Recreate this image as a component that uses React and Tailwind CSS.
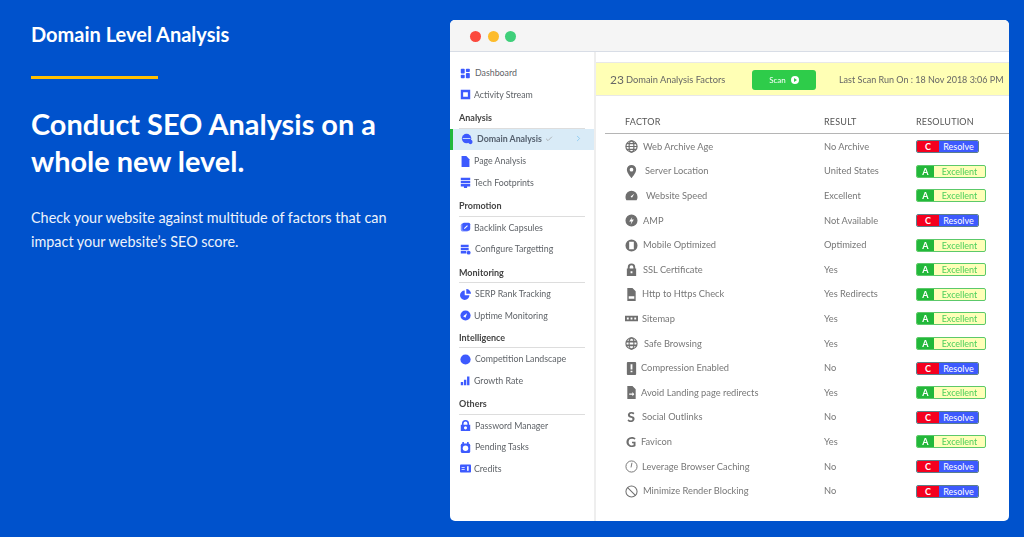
import { Check, ChevronRight } from 'lucide-react'

const blue = '#3d5afe'
const gray = '#6f6f6f'

const shapes = {
  dashboard: (
    <>
      <rect x="1" y="1" width="5" height="6" rx="1" />
      <rect x="7.5" y="1" width="5" height="4" rx="1" />
      <rect x="1" y="8.5" width="5" height="4.5" rx="1" />
      <rect x="7.5" y="6.5" width="5" height="6.5" rx="1" />
    </>
  ),
  stream: <path fillRule="evenodd" d="M1 1h12v12H1zM4 4v6h6V4z" />,
  domain: (
    <>
      <circle cx="6.5" cy="6.5" r="5.5" />
      <circle cx="11" cy="10.5" r="2.5" />
      <path d="M2 6h9v1H2z" fill="#dbeafe" />
    </>
  ),
  page: <path d="M2 0h6l4 4v10H2z" />,
  tech: <path d="M1 1h12v3H1zM1 5h12v3H1zM1 9h12v3H1zM5 12h4v2H5z" />,
  backlink: (
    <>
      <rect x="1" y="2" width="10" height="10" rx="2" opacity=".65" />
      <rect x="3" y="1" width="10" height="10" rx="2" />
      <path d="M5 8l4-4 1 1-4 4z" fill="#fff" />
    </>
  ),
  target: (
    <>
      <path d="M1 1h10v3H1zM1 5h10v3H1zM1 9h7v3H1z" />
      <circle cx="11" cy="11" r="2.5" />
    </>
  ),
  pie: <path d="M6 2v6h6a6 6 0 1 1-6-6zM8 0a6 6 0 0 1 6 6H8z" />,
  uptime: (
    <>
      <circle cx="7" cy="7" r="6.5" />
      <path d="M4 8l5-4-2 6z" fill="#fff" />
    </>
  ),
  circle: <circle cx="7" cy="7" r="6.5" />,
  growth: <path d="M1 9h3v4H1zM5 6h3v7H5zM9 2h3v11H9z" />,
  password: (
    <path
      fillRule="evenodd"
      d="M1 6h1.500V4.500a4.500 4.500 0 0 1 9 0V6H13v8H1zM4.500 6h5V4.500a2.500 2.500 0 0 0-5 0zM7 8a2 2 0 1 0 0 4 2 2 0 0 0 0-4z"
    />
  ),
  tasks: (
    <>
      <rect x="1" y="2" width="12" height="12" rx="2" />
      <circle cx="7" cy="8" r="3.500" fill="#fff" />
      <path d="M3 0h2v3H3zM9 0h2v3H9z" />
    </>
  ),
  credits: (
    <>
      <rect x="0" y="2" width="14" height="10" rx="1" />
      <path d="M2 5h4v1H2zM2 8h4v1H2zM9 4h2v6H9z" fill="#fff" />
    </>
  ),
  globe: (
    <g fill="none" stroke="currentColor" strokeWidth="1.300">
      <circle cx="7" cy="7" r="6" />
      <ellipse cx="7" cy="7" rx="2.600" ry="6" />
      <path d="M1 7h12M2 3.800h10M2 10.200h10" />
    </g>
  ),
  pin: (
    <path
      fillRule="evenodd"
      d="M7 0a5 5 0 0 1 5 5c0 3.500-5 9-5 9S2 8.500 2 5a5 5 0 0 1 5-5zm0 3a2 2 0 1 0 0 4 2 2 0 0 0 0-4z"
    />
  ),
  speed: (
    <path
      fillRule="evenodd"
      d="M7 2a6.500 6.500 0 0 1 6.500 6.500c0 1.300-.3 2.500-1 3.500h-11a6.500 6.500 0 0 1-1-3.500A6.500 6.500 0 0 1 7 2zm3 3L6 8l1.500 1.500z"
    />
  ),
  amp: (
    <path
      fillRule="evenodd"
      d="M7 .5a6.500 6.500 0 1 1 0 13 6.500 6.500 0 0 1 0-13zM8 3L4.500 8H7l-1 3.500L9.500 6H7z"
    />
  ),
  mobile: (
    <path
      fillRule="evenodd"
      d="M7 .5a6.500 6.500 0 1 1 0 13 6.500 6.500 0 0 1 0-13zM4.500 3v8h5V3z"
    />
  ),
  lock: (
    <path
      fillRule="evenodd"
      d="M2 6h1V4.500a4 4 0 0 1 8 0V6h1v8H2zM5 6h4V4.500a2 2 0 0 0-4 0zM6 9v2h2V9z"
    />
  ),
  file: (
    <path
      fillRule="evenodd"
      d="M2.500 0H8l3.500 3.500V14h-9zM4 9v2.500h6V9z"
    />
  ),
  sitemap: (
    <path
      fillRule="evenodd"
      d="M0 4h14v6H0zM2 6v2h2V6zM6 6v2h2V6zM10 6v2h2V6z"
    />
  ),
  safe: (
    <g fill="none" stroke="currentColor" strokeWidth="1.200">
      <circle cx="7" cy="7" r="6" />
      <ellipse cx="7" cy="7" rx="2.600" ry="6" />
      <path d="M1 5h12M1 9h12" strokeWidth="1.800" />
    </g>
  ),
  compress: (
    <path
      fillRule="evenodd"
      d="M3 0h8a1 1 0 0 1 1 1v12a1 1 0 0 1-1 1H3a1 1 0 0 1-1-1V1a1 1 0 0 1 1-1zm3 2.500V8h2V2.500zm0 7V11h2V9.500z"
    />
  ),
  redirect: (
    <path
      fillRule="evenodd"
      d="M2.500 0H8l3.500 3.500V14h-9zM4.500 8v1.500H8V11l2-2.200L8 6.500V8z"
    />
  ),
  clock: (
    <g fill="none" stroke="currentColor" strokeWidth="1">
      <circle cx="7" cy="7" r="6" />
      <path d="M7.500 3L6.500 8" />
    </g>
  ),
  block: (
    <g fill="none" stroke="currentColor" strokeWidth="1.100">
      <circle cx="7" cy="7" r="6" />
      <path d="M2.800 2.800l8.400 8.400" />
    </g>
  ),
}

function Icon({ name, color, className }) {
  return (
    <svg viewBox="0 0 14 14" className={className} style={{ color }} fill="currentColor">
      {shapes[name]}
    </svg>
  )
}

const sideGroups = [
  {
    items: [
      { label: 'Dashboard', icon: 'dashboard', gap: 'ml-[4px]' },
      { label: 'Activity Stream', icon: 'stream', gap: 'ml-[3px]' },
    ],
  },
  {
    title: 'Analysis',
    items: [
      { label: 'Domain Analysis', icon: 'domain', gap: 'ml-[4px]', active: true },
      { label: 'Page Analysis', icon: 'page', gap: 'ml-[3px]' },
      { label: 'Tech Footprints', icon: 'tech', gap: 'ml-[3px]' },
    ],
  },
  {
    title: 'Promotion',
    items: [
      { label: 'Backlink Capsules', icon: 'backlink', gap: 'ml-[3px]' },
      { label: 'Configure Targetting', icon: 'target', gap: 'ml-[4px]' },
    ],
  },
  {
    title: 'Monitoring',
    tight: true,
    items: [
      { label: 'SERP Rank Tracking', icon: 'pie', gap: 'ml-[4px]' },
      { label: 'Uptime Monitoring', icon: 'uptime', gap: 'ml-[3px]' },
    ],
  },
  {
    title: 'Intelligence',
    items: [
      { label: 'Competition Landscape', icon: 'circle', gap: 'ml-[4px]' },
      { label: 'Growth Rate', icon: 'growth', gap: 'ml-[3px]' },
    ],
  },
  {
    title: 'Others',
    items: [
      { label: 'Password Manager', icon: 'password', gap: 'ml-[4px]' },
      { label: 'Pending Tasks', icon: 'tasks', gap: 'ml-[4px]' },
      { label: 'Credits', icon: 'credits', gap: 'ml-[3px]' },
    ],
  },
]

const factors = [
  { name: 'Web Archive Age', icon: 'globe', pad: 'ml-[5px]', result: 'No Archive', ok: false },
  { name: 'Server Location', icon: 'pin', pad: 'ml-[7px]', result: 'United States', ok: true },
  { name: 'Website Speed', icon: 'speed', pad: 'ml-[8px]', result: 'Excellent', ok: true },
  { name: 'AMP', icon: 'amp', pad: 'ml-[5px]', result: 'Not Available', ok: false },
  { name: 'Mobile Optimized', icon: 'mobile', pad: 'ml-[5px]', result: 'Optimized', ok: true },
  { name: 'SSL Certificate', icon: 'lock', pad: 'ml-[5px]', result: 'Yes', ok: true },
  { name: 'Http to Https Check', icon: 'file', pad: 'ml-[4px]', result: 'Yes Redirects', ok: true },
  { name: 'Sitemap', icon: 'sitemap', pad: 'ml-[4px]', result: 'Yes', ok: true },
  { name: 'Safe Browsing', icon: 'safe', pad: 'ml-[6px]', result: 'Yes', ok: true },
  { name: 'Compression Enabled', icon: 'compress', pad: 'ml-[3px]', result: 'No', ok: false },
  { name: 'Avoid Landing page redirects', icon: 'redirect', pad: 'ml-[3px]', result: 'Yes', ok: true },
  { name: 'Social Outlinks', letter: 'S', pad: 'ml-[4px]', result: 'No', ok: false },
  { name: 'Favicon', letter: 'G', pad: 'ml-[3px]', result: 'Yes', ok: true },
  { name: 'Leverage Browser Caching', icon: 'clock', pad: 'ml-[4px]', result: 'No', ok: false },
  { name: 'Minimize Render Blocking', icon: 'block', pad: 'ml-[5px]', result: 'No', ok: false },
]

function Grade({ ok }) {
  if (ok) {
    return (
      <div className="flex h-[13px] w-[70px] overflow-hidden rounded-[2px] border border-[#5cc96a] bg-[#ffffb8] text-[9px] leading-[11px]">
        <span className="w-[17px] bg-[#22b83a] text-center font-bold text-white">A</span>
        <span className="flex-1 text-center text-[#4ccf5c]">Excellent</span>
      </div>
    )
  }
  return (
    <div className="flex h-[13px] w-[63px] overflow-hidden rounded-[2px] border border-[#5b7f8a] text-[9px] leading-[11px] text-white">
      <span className="w-[22px] bg-[#f5001e] text-center font-bold">C</span>
      <span className="flex-1 bg-[#3d5afe] text-center">Resolve</span>
    </div>
  )
}

function Sidebar() {
  return (
    <aside className="flex w-[146px] shrink-0 flex-col border-r-2 border-[#eeeeee] pt-[10.250px] text-[8.800px] text-[#5f6368]">
      {sideGroups.map((group, i) => (
        <div key={i} className={group.tight ? 'mb-[2px]' : 'mb-[3.500px]'}>
          {group.title && (
            <div className="mx-[9px] h-[20px] border-b border-[#dddddd] pt-[3.500px] text-[9px] font-bold leading-[12px] text-[#444444]">
              {group.title}
            </div>
          )}
          {group.items.map((item) =>
            item.active ? (
              <div
                key={item.label}
                className="flex h-[21.500px] items-center border-l-[3px] border-[#22b83a] bg-[#d9ebf7] pb-[2px] pl-[8px] font-bold text-[#55606e]"
              >
                <Icon name={item.icon} color={blue} className="h-[12px] w-[12px]" />
                <span className={item.gap}>{item.label}</span>
                <Check className="ml-[3px] h-[8px] w-[8px] text-[#9a9a9a]" />
                <ChevronRight className="ml-auto mr-[11px] h-[9px] w-[9px] text-[#7cc4f0]" />
              </div>
            ) : (
              <div key={item.label} className="flex h-[21.500px] items-center pl-[10px]">
                <Icon name={item.icon} color={blue} className="h-[11px] w-[11px]" />
                <span className={item.gap}>{item.label}</span>
              </div>
            ),
          )}
        </div>
      ))}
    </aside>
  )
}

export default function App() {
  return (
    <div className="flex h-[537px] w-[1024px] overflow-hidden bg-[#0052cc] font-['Lato',sans-serif]">
      <div className="w-[450px] shrink-0 pl-[31px] pt-[21px] text-white">
        <h3 className="text-[20px] font-bold leading-[26px]">Domain Level Analysis</h3>
        <div className="mt-[29px] h-[3px] w-[127px] bg-[#ffc000]" />
        <h2 className="mt-[26px] w-[380px] text-[28.900px] font-bold leading-[37px]">
          Conduct SEO Analysis on a whole new level.
        </h2>
        <p className="mt-[27px] w-[380px] text-[14.400px] leading-[24px] text-[#eef3fb]">
          Check your website against multitude of factors that can impact your website’s SEO score.
        </p>
      </div>

      <div className="mt-[20px] flex h-[501px] w-[559px] flex-col overflow-hidden rounded-[5px] bg-white blur-[0.4px]">
        <div className="flex h-[32px] shrink-0 items-center gap-[6.500px] border-b border-[#d8dde6] bg-[#f5f5f5] pl-[20px] pt-[2px]">
          <span className="h-[11px] w-[11px] rounded-full bg-[#fb4a3e]" />
          <span className="h-[11px] w-[11px] rounded-full bg-[#fdbc2c]" />
          <span className="h-[11px] w-[11px] rounded-full bg-[#3fcf7a]" />
        </div>

        <div className="flex min-h-0 flex-1">
          <Sidebar />

          <main className="flex-1 pt-[10px]">
            <div className="flex h-[34px] items-center whitespace-nowrap border-y border-[#e8e8e8] bg-[#ffffb5] pl-[14px] pt-[1px] text-[#666666]">
              <span className="w-[13px] text-[12px]">23</span>
              <span className="ml-[3px] w-[99px] text-[9.300px]">Domain Analysis Factors</span>
              <button className="ml-[27px] flex h-[20px] w-[64px] items-center justify-center gap-[5px] rounded-[3px] bg-[#2ecc4a] text-[8px] text-white">
                Scan
                <svg viewBox="0 0 10 10" className="h-[8px] w-[8px]" fill="#ffffff">
                  <path fillRule="evenodd" d="M5 0a5 5 0 1 1 0 10A5 5 0 0 1 5 0zM3.800 2.500v5L7.500 5z" />
                </svg>
              </button>
              <span className="ml-[23px] text-[9px]">Last Scan Run On : 18 Nov 2018 3:06 PM</span>
            </div>

            <div className="ml-[9px] mt-[19px] flex h-[19px] items-start border-b border-[#b5b5b5] text-[9px] tracking-[0.2px] text-[#555555]">
              <span className="ml-[20px] w-[199px]">FACTOR</span>
              <span className="w-[92px]">RESULT</span>
              <span>RESOLUTION</span>
            </div>

            <div className="pt-[0.500px] text-[9.300px] text-[#777777]">
              {factors.map((f) => (
                <div key={f.name} className="flex h-[24.600px] items-center">
                  <div className="ml-[28px] flex w-[200px] items-center">
                    <span className="flex w-[14px] justify-center">
                      {f.letter ? (
                        <span className="text-[14px] font-black leading-none" style={{ color: gray }}>
                          {f.letter}
                        </span>
                      ) : (
                        <Icon name={f.icon} color={gray} className="h-[13px] w-[13px]" />
                      )}
                    </span>
                    <span className={f.pad}>{f.name}</span>
                  </div>
                  <span className="w-[92px]">{f.result}</span>
                  <Grade ok={f.ok} />
                </div>
              ))}
            </div>
          </main>
        </div>
      </div>
    </div>
  )
}
